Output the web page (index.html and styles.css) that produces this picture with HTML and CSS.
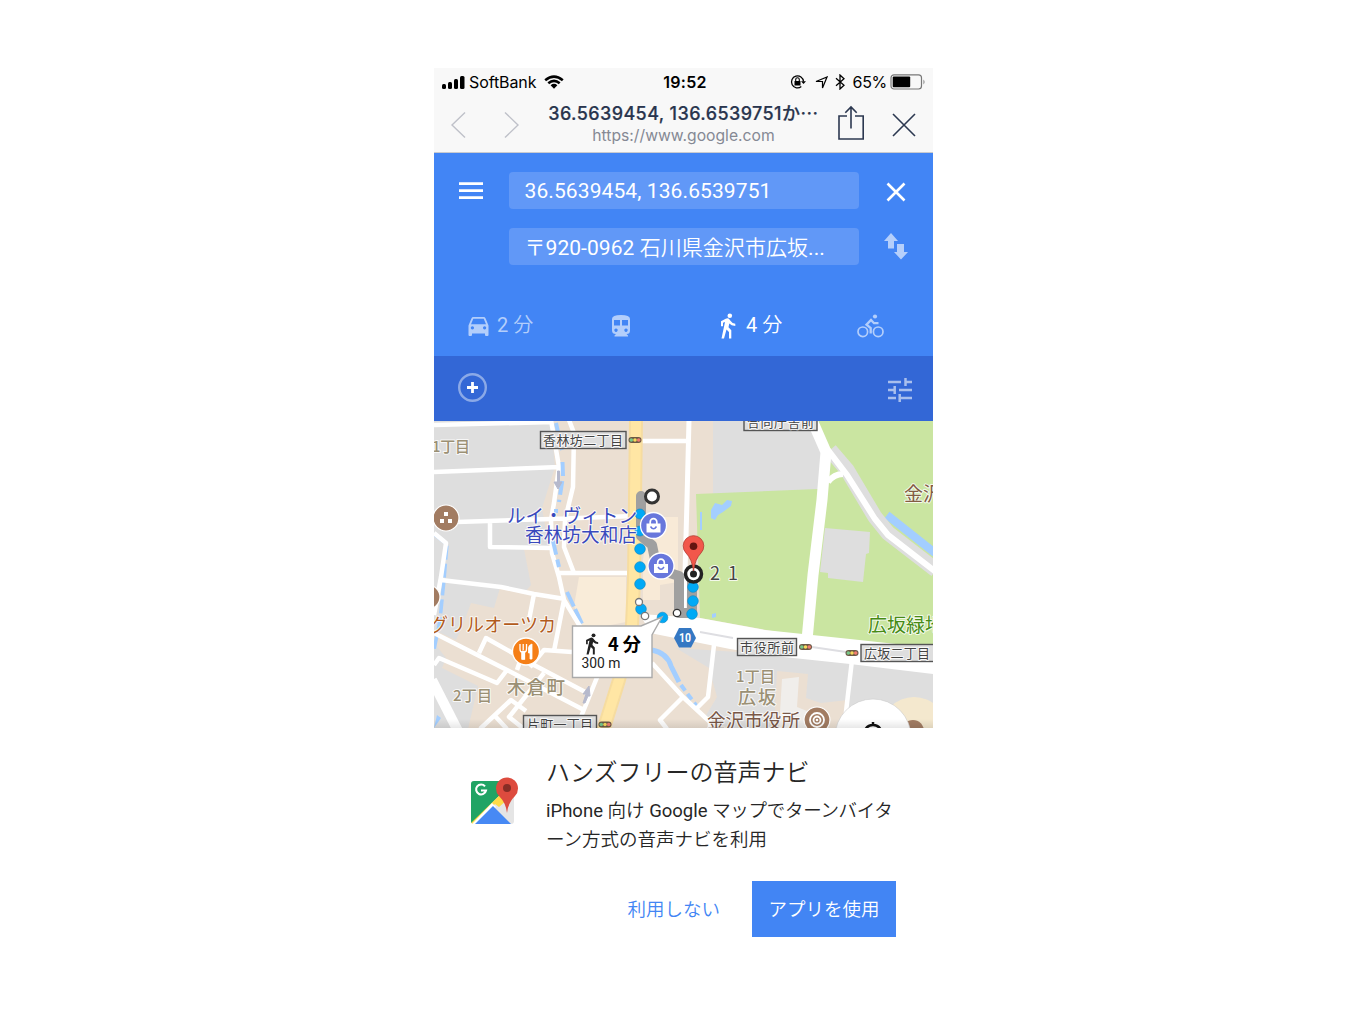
FILE: index.html
```html
<!DOCTYPE html>
<html lang="ja">
<head>
<meta charset="utf-8">
<title>Google マップ</title>
<link rel="stylesheet" href="styles.css">
</head>
<body>
<main class="phone">
  <header class="browser">
    <div class="status">
      <div class="carrier">
        <svg width="23" height="14" viewBox="0 0 23 14"><rect x="0" y="9" width="4" height="5" rx="1.5"/><rect x="6" y="7" width="4" height="7" rx="1.5"/><rect x="12" y="4" width="4" height="10" rx="1.5"/><rect x="18" y="1" width="4.5" height="13" rx="1.5"/></svg>
        <span class="network">SoftBank</span>
        <svg width="20" height="14" viewBox="0 0 20 14"><g fill="none" stroke="#000" stroke-width="2.6"><path d="M1.2 5.2Q10 -2 18.8 5.2"/><path d="M4.3 8.3Q10 3.5 15.7 8.3"/></g><path d="M6.6 10.2Q10 7.4 13.4 10.2L10 13.8Z"/></svg>
      </div>
      <span class="clock">19:52</span>
      <div class="indicators">
        <svg width="16" height="16" viewBox="0 0 16 16"><path d="M13.5 7.5a6 6 0 1 0-2.2 5.1" fill="none" stroke="#000" stroke-width="1.3"/><path d="M11 7.2h5L13.5 10Z"/><rect x="4.5" y="7" width="6" height="4.5"/><path d="M5.7 7V5.6a1.8 1.8 0 0 1 3.6 0V7" fill="none" stroke="#000" stroke-width="1.1"/></svg>
        <svg class="gps" width="13" height="13" viewBox="0 0 13 13"><path d="M1 5.5L12 1L7.500 12V5.500Z" fill="none" stroke="#000" stroke-width="1.2"/></svg>
        <svg class="bt" width="10" height="16" viewBox="0 0 10 16"><path d="M1 4.3L9 11.3L5 15V1L9 4.7L1 11.7" fill="none" stroke="#000" stroke-width="1.3"/></svg>
        <span class="percent">65%</span>
        <svg width="36" height="16" viewBox="0 0 36 16"><rect x="1" y=".8" width="30.5" height="14.2" rx="3" fill="none" stroke="#777" stroke-width="1.2"/><rect x="2.7" y="2.6" width="17.5" height="10.6" rx="1"/><path d="M33.5 5.5q2 2.5 0 5Z" fill="#777"/></svg>
      </div>
    </div>
    <div class="nav">
      <svg class="arrows" width="70" height="28" viewBox="0 0 70 28" fill="none" stroke="#bfc1c9" stroke-width="1.4"><path d="M15 1.5L2 14L15 26.5M55 1.5L68 14L55 26.5"/></svg>
      <div class="address">
        <div class="page-title">36.5639454, 136.6539751か<span class="dots">…</span></div>
        <div class="url">https://www.google.com</div>
      </div>
      <svg class="share" width="28" height="36" viewBox="0 0 28 36" fill="none" stroke="#2c3850" stroke-width="1.6"><path d="M10 11H2V34H26.2V11H18M14 23.5V2M8.3 7.7L14 2L19.7 7.7"/></svg>
      <svg class="dismiss" width="24" height="24" viewBox="0 0 24 24" stroke="#2c3850" stroke-width="1.6"><path d="M1 1L23 23M23 1L1 23"/></svg>
    </div>
  </header>

  <section class="directions">
    <div class="row">
      <svg class="menu" width="25" height="18" viewBox="0 0 25 18" fill="#fff"><path d="M0 .3h24v2.6H0zM0 7.3h24v2.6H0zM0 14.3h24v2.6H0z"/></svg>
      <div class="field from">36.5639454, 136.6539751</div>
      <svg class="clear" width="20" height="20" viewBox="0 0 20 20" stroke="#fff" stroke-width="2.6"><path d="M1.5 1.5L18.5 18.5M18.5 1.5L1.5 18.5"/></svg>
    </div>
    <div class="row second">
      <div class="field to"><span class="jp">〒</span>920-0962 <span class="jp">石川県金沢市広坂</span>...</div>
      <svg class="swap" width="24" height="27" viewBox="0 0 24 27" fill="#b5cffb"><path d="M7 0L14 8H10V15.5H4V8H0ZM13 11H20V19H24L17 26.5L10 19H13Z"/></svg>
    </div>
    <div class="modes">
      <div class="mode car"><svg width="21" height="19" viewBox="0 0 21 19" fill="#b3cefb" fill-rule="evenodd"><path d="M3.5 1.3Q4 0 5.4 0H15.6Q17 0 17.5 1.3L20.5 8.6V18Q20.5 19 19.5 19H18Q17 19 17 18V16.5H4V18Q4 19 3 19H1.5Q.5 19 .5 18V8.6ZM5.3 1.7L3 7.2H18L15.7 1.7ZM4.4 9.3a1.6 1.6 0 1 0 .01 0ZM16.6 9.3a1.6 1.6 0 1 0 .01 0Z"/></svg><span class="time">2 <span class="jp">分</span></span></div>
      <div class="mode train"><svg width="18" height="22" viewBox="0 0 18 22" fill="#b3cefb" fill-rule="evenodd"><path d="M0 4Q0 0 9 0T18 4V15.5Q18 19 14.5 19L16 20.5V21.5H2.5V20.5L4 19Q0 19 0 15.5ZM2 5V10.5H8V5ZM10 5V10.5H16V5ZM4 13.5a1.7 1.7 0 1 0 .01 0ZM14 13.5a1.7 1.7 0 1 0 .01 0Z"/></svg></div>
      <div class="mode walk"><svg width="16" height="26" viewBox="0 0 16 26" fill="#fff"><circle cx="9.8" cy="2.8" r="2.3"/><path d="M5.7 5.8L1 8.3V13.3H3V9.8L5 8.9L1.5 25.5H4L6.5 16.5L9 19V25.5H11.3V17.2L8.5 14.2L9.3 10.5Q11.2 12.8 15.3 12.9V10.8Q12.3 10.7 10.7 8L9.5 6.4Q8 4.7 5.7 5.8Z"/></svg><span class="time">4 <span class="jp">分</span></span></div>
      <div class="mode bike"><svg width="27" height="24" viewBox="0 0 27 24" fill="none" stroke="#b3cefb"><circle cx="5.8" cy="17.8" r="4.8" stroke-width="1.7"/><circle cx="21.2" cy="17.8" r="4.8" stroke-width="1.7"/><circle cx="18" cy="2.5" r="2.1" fill="#b3cefb" stroke="none"/><path d="M13.7 19.5V14L9.5 10.7L14 6L17 9.2H21.5" stroke-width="2.3"/></svg></div>
    </div>
  </section>

  <section class="options">
    <svg width="30" height="30" viewBox="0 0 30 30" fill="none"><circle cx="15.500" cy="14.500" r="13.3" stroke="#8ba9e7" stroke-width="2.4"/><path d="M15.500 9V20M10 14.500H21" stroke="#fff" stroke-width="2.8"/></svg>
    <svg class="tune" width="24" height="25" viewBox="0 0 24 25" fill="none" stroke="#a9bfed" stroke-width="2.5"><path d="M0 5H13M17 5H24M17.5 1V9M0 13H7M11 13H24M6.7 9V17M0 21H8M12 21H24M11.7 17V25"/></svg>
  </section>

  <svg class="map" width="499" height="307" viewBox="434 421 499 307">
    <defs>
      <g id="signal"><rect x="-6.5" y="-3" width="13" height="6" rx="3" fill="#6c5845"/><circle cx="-3.7" r="1.8" fill="#78c88a"/><circle r="1.8" fill="#f6d95b"/><circle cx="3.7" r="1.8" fill="#f07d70"/></g>
      <g id="shop"><circle r="13" fill="#6877dc" stroke="#fff" stroke-width="1.3"/><path d="M-7 -2H7V7H-7Z" fill="#fff"/><path d="M-3.3 -1.5V-3.5A3.3 3.3 0 0 1 3.3 -3.5V-1.5" fill="none" stroke="#fff" stroke-width="1.7"/><path d="M-3 1Q0 5.5 3 1" fill="none" stroke="#6877dc" stroke-width="1.5"/></g>
      <linearGradient id="shade" x1="0" y1="0" x2="0" y2="1"><stop offset="0" stop-opacity="0"/><stop offset="1" stop-opacity=".1"/></linearGradient>
    </defs>
    <rect x="434" y="421" width="499" height="308" fill="#ebdfd2"/>
    <path d="M434 421H551L555 467L542 508L549 549H524L531 585L525 592L500 588L494 608L471 603L464 622L456 640L434 630Z" fill="#dedede"/>
    <path d="M434 643L446 658L442 668L478 686L468 729H434Z" fill="#dedede"/>
    <path d="M713 421H818L826 450L818 490L713 495Z" fill="#dedede"/>
    <path d="M676 648L933 665V729H730L705 717L717 697L709 668Z" fill="#dedede"/>
    <path d="M579 577H626V622L606 626H582L574 606Z" fill="#f9ecd9"/>
    <path d="M649 517H678V582L660 585V600H643V560Z" fill="#f8ead7"/>
    <path d="M696 494L818 489L826 450L812 421H933V650L805 637L700 618Z" fill="#cae5a1"/>
    <path d="M777 671L808 674L806 698L821 703L848 700L844 729H774Z" fill="#ebdfd2"/>
    <path d="M782 679L799 677L797 707L807 711L805 729H779Z" fill="#f0eeeb"/>
    <path d="M825 528L870 532L869 553L866 554L863 582L828 578V573L820 572Z" fill="#dedede"/>
    <g fill="none" stroke="#a3ceff">
      <path d="M434 534L447 544L444 580L440 620L434 650" stroke-width="3.5" stroke-dasharray="14 4"/>
      <path d="M567 592L583 626" stroke-width="4" stroke-dasharray="16 3"/>
      <path d="M652 650Q667 653 671 666L679 682" stroke-width="5"/>
      <path d="M681 685L698 708" stroke-width="4" stroke-dasharray="7 4"/>
      <path d="M887 515L935 553" stroke-width="8"/>
      <path d="M701 512V530" stroke-width="2"/>
    </g>
    <path d="M711 510L715 503L722 505L727 500L732 501L731 506L723 512L718 515L715 520L711 518ZM712 614L716 613V617L712 618ZM434 728L441 718L437 715Z" fill="#a3ceff"/>
    <g fill="none" stroke="#fff" stroke-width="4.5" stroke-linejoin="round">
      <path d="M434 425L553 422M434 472L559 467M551 420L559 467L554 503L551 520L552 553L559 577L564 600L581 628"/>
      <path d="M569 420L574 433L573 487L565 520L564 547L574 573M457 522L551 519L634 516M490 523V547L551 548M557 573H627M642 441H688"/>
      <path d="M689 420L687 500L684 610" stroke-width="5"/>
      <path d="M434 533L446 543L441 577L434 615M441 580L501 587L534 594L565 599M534 594L529 620M522 655L517 670M434 633L507 670L582 709M507 670L497 683L439 658L434 665M479 653L486 638L534 665L589 694M544 673L509 717L524 729M564 600L554 651M530 667L544 650L572 652M480 729L511 700L526 711M495 716L507 729M598 675L576 729"/>
      <path d="M652 663L683 697L710 722V729M683 697L660 720L667 729M714 645L708 697L696 709M852 660L844 729"/>
      <path d="M432 680L458 731" stroke-width="10"/>
    </g>
    <path d="M556 423L562 450M562.500 462L563 476L559 502M556 509V513M553 541L559 567" fill="none" stroke="#a3ceff" stroke-width="4" stroke-dasharray="14 5"/>
    <path d="M636 420L634 580L632 625L619 680L603 731" fill="none" stroke="#f6dca0" stroke-width="14"/>
    <path d="M636 420L634 580L632 625L619 680L603 731" fill="none" stroke="#ffe6a4" stroke-width="10"/>
    <path d="M830 450L847 470L875 517L888 533L936 570" fill="none" stroke="#dedede" stroke-width="15"/>
    <path d="M812 420L826 452L822 500L813 575L807 640" fill="none" stroke="#fff" stroke-width="11"/>
    <path d="M828 450L847 475L875 519L888 535L936 572M828 482Q834 474 843 474" fill="none" stroke="#fff" stroke-width="6"/>
    <path d="M640 614L700 618L765 630L850 639L933 648V674L850 664L765 655L730 649L650 633Z" fill="#fff"/>
    <path d="M700 632L733 638M812 647L846 652" stroke="#dedee2" stroke-width="2"/>
    <path d="M557.500 471V482H554L558 489L562 482H559.500V471ZM583 703L586 694H583L589 686L590 696H588L585 703Z" fill="#b6b9cc" stroke="#b6b9cc"/>

    <path d="M641 496V536L652 545L657 569L679 576V613H692V578" fill="none" stroke="#a0a0a0" stroke-width="10" stroke-linejoin="round" stroke-linecap="round"/>
    <g fill="#00a9f6" stroke="#168bc4" stroke-width=".7"><circle cx="640" cy="514" r="5"/><circle cx="640" cy="531" r="5"/><circle cx="640" cy="549" r="5.300"/><circle cx="640" cy="567" r="5.300"/><circle cx="640" cy="584" r="5.300"/><circle cx="641" cy="609" r="5.300"/><circle cx="662.500" cy="617.500" r="5.300"/><circle cx="692" cy="614" r="5.300"/><circle cx="693" cy="601" r="5.300"/><circle cx="693" cy="587" r="5.300"/></g>
    <g fill="#fff" stroke="#777" stroke-width="1.300"><circle cx="639" cy="602" r="3.500"/><circle cx="645" cy="616" r="3.700"/><circle cx="677" cy="613" r="3.700" stroke="#333"/></g>
    <circle cx="652" cy="496.500" r="6.500" fill="#fff" stroke="#333" stroke-width="3"/>
    <circle cx="693.500" cy="574" r="8" fill="#fff" stroke="#222" stroke-width="3.500"/><circle cx="693.500" cy="574" r="3.500" fill="#222"/>

    <g class="place" font-size="19"><text x="507" y="522.500" textLength="130" lengthAdjust="spacingAndGlyphs" fill="#3949bd">ルイ・ヴィトン</text><text x="525" y="541.500" textLength="112" lengthAdjust="spacingAndGlyphs" fill="#3949bd">香林坊大和店</text></g>
    <use href="#shop" x="653.500" y="525.500"/><use href="#shop" x="661" y="566"/>
    <path d="M693.500 571Q692 559 686 553A10.300 10.300 0 1 1 701 553Q695 559 693.500 571Z" fill="#f2574b" stroke="#b33a31" stroke-width=".8"/><circle cx="693.500" cy="546.300" r="3.800" fill="#661511"/>
    <g class="place" font-size="18"><text x="710" y="580" fill="#444" textLength="28">2 1</text></g>

    <path d="M572.500 626H641L662 617L652 635V677.500H572.500Z" fill="#fff" stroke="#aaa" stroke-width="1.400"/>
    <svg x="585" y="633" width="14" height="22" viewBox="0 0 16 26" fill="#222"><circle cx="9.800" cy="2.800" r="2.300"/><path d="M5.700 5.800L1 8.300V13.300H3V9.800L5 8.900L1.500 25.500H4L6.500 16.500L9 19V25.500H11.300V17.200L8.500 14.200L9.300 10.500Q11.200 12.800 15.300 12.900V10.800Q12.300 10.700 10.700 8L9.500 6.400Q8 4.700 5.700 5.800Z"/></svg>
    <text x="608" y="651" font-size="18" font-weight="700" textLength="33" lengthAdjust="spacingAndGlyphs">4 分</text>
    <text class="latin" x="581.500" y="668" font-size="14" textLength="39" lengthAdjust="spacingAndGlyphs" fill="#222">300 m</text>
    <path d="M679 628H691L696 638L691 647.500H679L674 638Z" fill="#3578c3"/><text class="latin" x="679" y="642" font-size="12" font-weight="700" fill="#fff" textLength="12" lengthAdjust="spacingAndGlyphs">10</text>

    <g fill="#dedede" stroke="#555" stroke-width="1.400"><rect x="540.500" y="431.500" width="85.500" height="17"/><rect x="744" y="410" width="73" height="20.500"/><rect x="737.500" y="638.500" width="59" height="17"/><rect x="861" y="644.500" width="80" height="17"/><rect x="523.500" y="715.500" width="73" height="20"/></g>
    <g class="place" font-size="13" fill="#444"><text x="543" y="444.500" textLength="80">香林坊二丁目</text><text x="747" y="426.500" textLength="67">合同庁舎前</text><text x="740" y="651.500" textLength="54">市役所前</text><text x="864" y="657.500" textLength="66">広坂二丁目</text><text x="527" y="729" textLength="66">片町一丁目</text></g>
    <use href="#signal" x="635" y="440"/><use href="#signal" x="805.500" y="647"/><use href="#signal" x="852" y="653"/><use href="#signal" x="605" y="724.500"/>

    <g class="place area"><text x="432" y="452" font-size="15" textLength="38">1丁目</text><text x="453" y="701" font-size="15" textLength="39">2丁目</text><text x="507" y="694" font-size="18.500" textLength="58">木倉町</text><text x="736" y="682" font-size="15" textLength="39">1丁目</text><text x="738" y="704" font-size="18" textLength="38">広坂</text></g>
    <g class="place" font-size="19"><text x="430" y="631.500" fill="#b25b1c" textLength="126" lengthAdjust="spacingAndGlyphs">グリルオーツカ</text><text x="904" y="501" fill="#825c43">金沢城</text><text x="868" y="632" fill="#468b15">広坂緑地</text><text x="707" y="727.500" fill="#795747" textLength="93" lengthAdjust="spacingAndGlyphs">金沢市役所</text></g>
    <g fill="#a27c62" stroke="#fff" stroke-width="1.200"><circle cx="446" cy="518" r="13"/><circle cx="428" cy="597" r="12"/><circle cx="817" cy="720" r="13"/></g>
    <path d="M444 512H448V516H444ZM440 519H444V523H440ZM448 519H452V523H448Z" fill="#fff"/>
    <g fill="none" stroke="#fff" stroke-width="1.800"><circle cx="817" cy="720" r="7"/><circle cx="817" cy="720" r="3.500"/></g><circle cx="817" cy="720" r="1.300" fill="#fff"/>
    <circle cx="526" cy="651.500" r="13.500" fill="#f57f17" stroke="#fff" stroke-width="1.300"/><path d="M520 644V649Q520 652 522 652V659H524.500V652Q526.500 652 526.500 649V644M523.200 644V650" fill="none" stroke="#fff" stroke-width="1.300"/><path d="M522 651H524.500V659H522ZM530 659V653H528.500V648Q528.500 645 532 644V659Z" fill="#fff" stroke="#fff" stroke-width=".8"/>
    <circle cx="914" cy="730" r="33" fill="#f4e8ce"/><circle cx="913" cy="731" r="11" fill="#a27c62"/>
    <circle cx="873" cy="737" r="38" fill="#fff" stroke="#ccc" stroke-width=".6"/><path d="M873 722V726M865 730A9 9 0 0 1 881 730" fill="none" stroke="#111" stroke-width="2.500"/>
    <rect x="434" y="719" width="499" height="10" fill="url(#shade)"/>
  </svg>

  <section class="promo">
    <div class="pitch">
      <svg class="logo" width="49" height="49" viewBox="0 0 49 49"><defs><clipPath id="tile"><rect x="1" y="5" width="43" height="43" rx="3"/></clipPath></defs><g clip-path="url(#tile)"><rect y="4" width="45" height="45" fill="#e5e5e5"/><path d="M0 4H45L2 47H0Z" fill="#20a464"/><path d="M1 47L38 11L46 16L29 31L25 28L5 48H1Z" fill="#ffdc48"/><path d="M22 27L26 31L8 48H2Z" fill="#fff"/><path d="M23 30L41 48H5Z" fill="#4789f4"/></g><path d="M15 10.300A5 5 0 1 0 16 14.500H11" fill="none" stroke="#fff" stroke-width="2.100"/><path d="M37 37Q36 27 29 20A11 11 0 1 1 45 20Q38 27 37 37Z" fill="#dd4b3e"/><circle cx="37" cy="12" r="4" fill="#872d25"/></svg>
      <div class="copy"><h1>ハンズフリーの音声ナビ</h1><p>iPhone <span class="jp">向け</span> Google <span class="jp tight">マップでターンバイタ</span><br><span class="jp">ーン方式の音声ナビを利用</span></p></div>
    </div>
    <div class="actions"><button class="decline">利用しない</button><button class="accept">アプリを使用</button></div>
  </section>
</main>
</body>
</html>
```
FILE: styles.css
```css
* { box-sizing: border-box; }
body { margin: 0; background: #fff; }
svg { display: block; flex: none; }
.phone { width: 499px; margin: 68px 0 0 434px; font-family: Roboto, "Noto Sans CJK JP", sans-serif; overflow: hidden; }
.browser { height: 85px; background: #f8f8f8; border-bottom: 1px solid #c9cbd0; font-family: Inter, "Noto Sans CJK JP", sans-serif; }
.status { height: 28px; display: grid; grid-template-columns: 1fr auto 1fr; align-items: center; padding: 0 7px 0 8px; font-size: 16px; line-height: 27px; white-space: nowrap; }
.carrier, .indicators { display: flex; align-items: center; }
.network { margin: 0 8px 0 4px; letter-spacing: -.1px; }
.clock { position: relative; left: 1px; font-weight: 600; letter-spacing: .3px; }
.indicators { justify-content: flex-end; }
.gps { margin-left: 9px; }
.bt { margin: 0 8px 0 7px; }
.percent { margin-right: 3px; letter-spacing: -.3px; }
.nav { display: flex; height: 56px; padding-left: 16px; }
.arrows { margin-top: 15px; }
.address { width: 271px; margin-left: 28px; text-align: center; white-space: nowrap; }
.page-title { height: 27px; line-height: 33px; font-size: 18px; font-weight: 500; letter-spacing: .4px; color: #29354e; -webkit-text-stroke: .2px #29354e; }
.dots { font-family: "Noto Sans CJK JP"; }
.url { font-size: 15.700px; line-height: 26px; color: #858994; }
.share { margin: 9px 0 0 18px; }
.dismiss { margin: 17px 0 0 27px; }
.directions { height: 203px; padding-top: 19px; background: #4285f5; }
.row { display: flex; align-items: flex-start; height: 56px; }
.menu { margin: 10px 24.500px 0 25px; }
.field { width: 350px; height: 37px; padding: 1px 16px; border-radius: 4px; background: #6198f7; color: #fff; font-size: 21px; line-height: 37px; white-space: nowrap; overflow: hidden; letter-spacing: .1px; }
.to { padding-top: 2px; letter-spacing: .05px; }
.jp { font-weight: 350; }
.clear { margin: 10px 0 0 27.500px; }
.second { padding-left: 74.500px; }
.swap { margin: 5px 0 0 25.500px; }
.modes { display: grid; grid-template-columns: 126px 125px 125px 123px; padding-top: 27px; }
.mode { display: flex; align-items: center; height: 30px; gap: 8px; color: #b3cefb; font-size: 20px; line-height: 26px; }
.time { padding-bottom: 3px; }
.car { padding-left: 34px; }
.train { padding-left: 52px; }
.walk { padding-left: 35px; gap: 10px; color: #fff; }
.bike { padding-left: 47px; }
.options { display: flex; justify-content: space-between; align-items: center; height: 65px; padding: 0 21px 2px 23px; background: #3367d6; }
.tune { margin-top: 4px; }
.map { font-family: "Noto Sans CJK JP", sans-serif; }
.latin { font-family: Roboto, sans-serif; }
.place { paint-order: stroke; stroke: #fff; stroke-opacity: .8; stroke-width: 2px; stroke-linejoin: round; }
.area { fill: #9b9074; font-weight: 500; }
.promo { background: #fff; }
.pitch { display: flex; padding: 28px 0 0 36px; }
.logo { margin-top: 20px; }
.copy { margin-left: 27px; color: #262626; white-space: nowrap; }
h1 { margin: 0; font-size: 24px; line-height: 34px; font-weight: 350; }
p { margin: 7px 0 0; font-size: 18.500px; line-height: 29px; }
.tight { letter-spacing: -.3px; }
.actions { display: flex; justify-content: flex-end; margin: 26px 37px 0 0; }
button { height: 56px; padding: 0 16px 2px; border: 0; font: 350 18.500px Roboto, "Noto Sans CJK JP", sans-serif; white-space: nowrap; }
.decline { margin-right: 16px; background: transparent; color: #4285f4; }
.accept { width: 144px; background: #4285f4; color: #fff; }
```
